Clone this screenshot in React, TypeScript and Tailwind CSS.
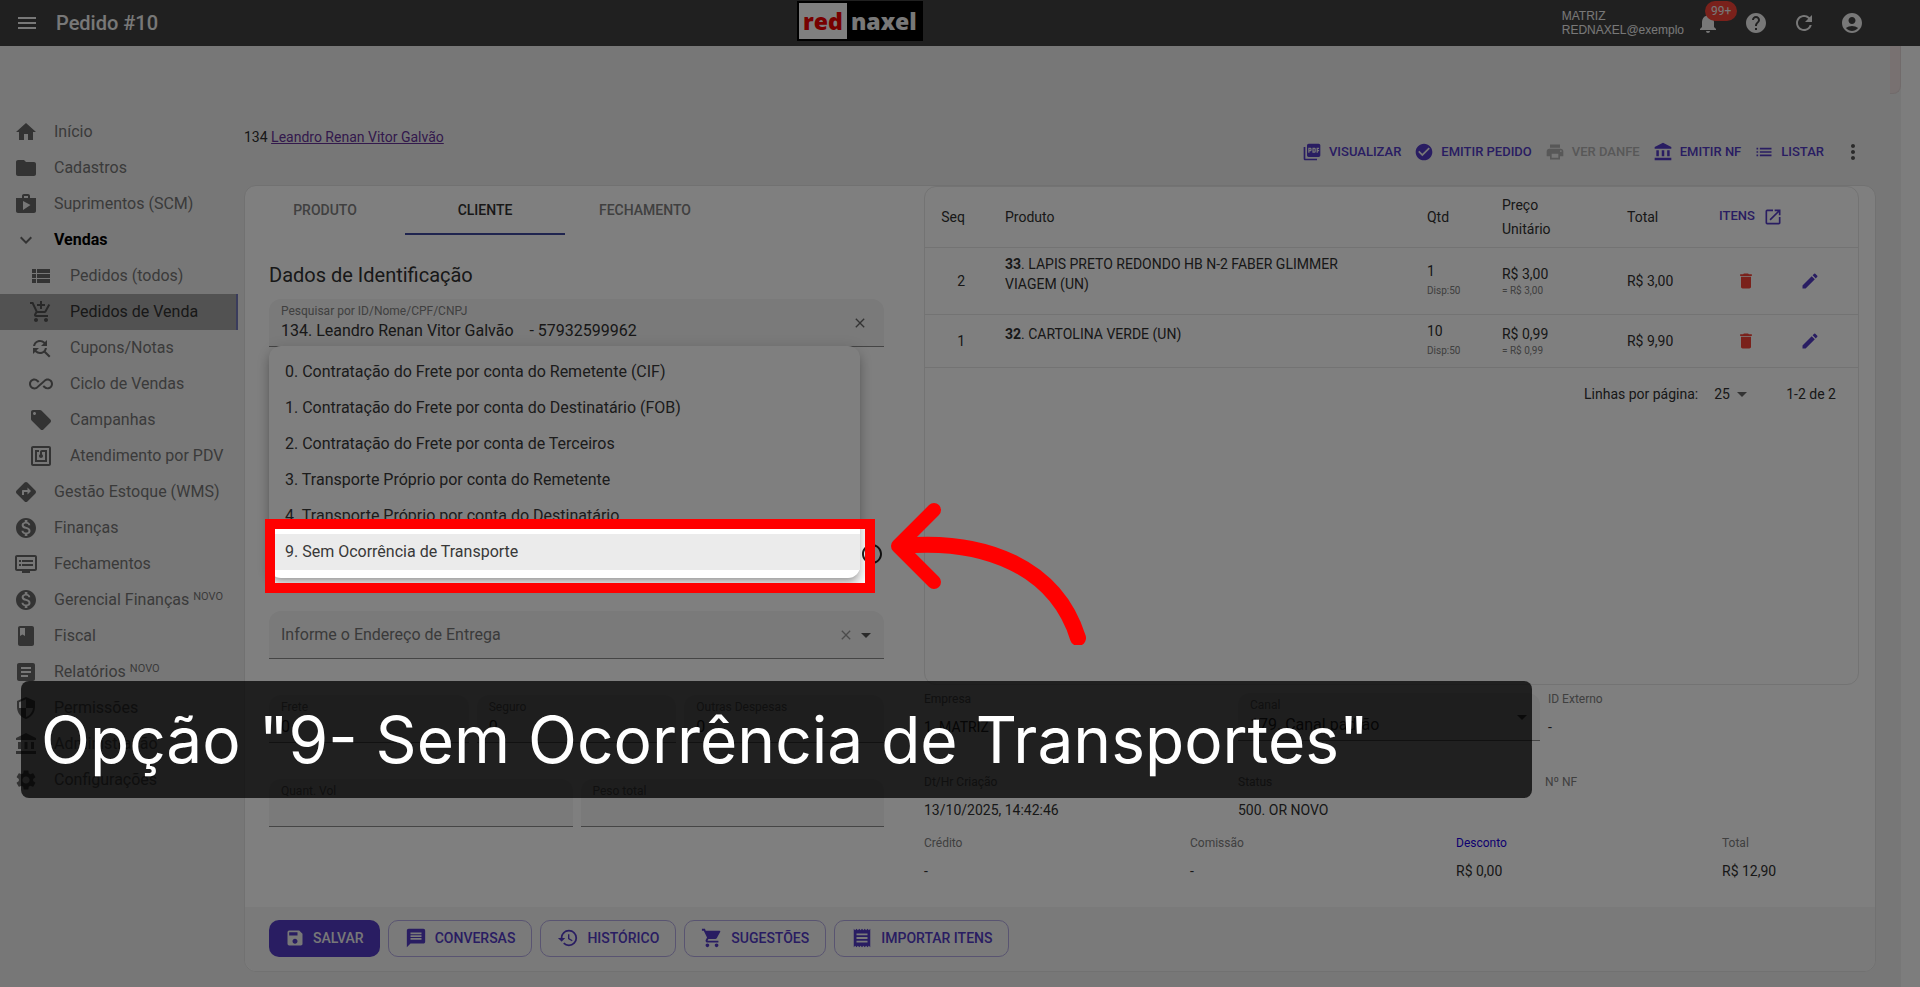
import React from 'react';
import {
  MdAccountBalance,
  MdAccountCircle,
  MdAddShoppingCart,
  MdAllInclusive,
  MdArrowDropDown,
  MdArticle,
  MdCheckCircle,
  MdClass,
  MdClose,
  MdDelete,
  MdDirections,
  MdDvr,
  MdEdit,
  MdExpandMore,
  MdFindReplace,
  MdFolder,
  MdHelp,
  MdHistory,
  MdHome,
  MdInfoOutline,
  MdList,
  MdLocalOffer,
  MdMenu,
  MdMessage,
  MdMonetizationOn,
  MdMoreVert,
  MdNfc,
  MdNotifications,
  MdOpenInNew,
  MdPictureAsPdf,
  MdPrint,
  MdReceipt,
  MdRefresh,
  MdSave,
  MdSecurity,
  MdSettings,
  MdShop,
  MdShoppingCart,
  MdViewList,
} from 'react-icons/md';
import type { IconType } from 'react-icons';

interface MenuItem {
  label: string;
  icon: IconType;
  sub?: boolean;
  open?: boolean;
  active?: boolean;
  isNew?: boolean;
}

const menuItems: MenuItem[] = [
  { label: 'Início', icon: MdHome },
  { label: 'Cadastros', icon: MdFolder },
  { label: 'Suprimentos (SCM)', icon: MdShop },
  { label: 'Vendas', icon: MdExpandMore, open: true },
  { label: 'Pedidos (todos)', icon: MdViewList, sub: true },
  { label: 'Pedidos de Venda', icon: MdAddShoppingCart, sub: true, active: true },
  { label: 'Cupons/Notas', icon: MdFindReplace, sub: true },
  { label: 'Ciclo de Vendas', icon: MdAllInclusive, sub: true },
  { label: 'Campanhas', icon: MdLocalOffer, sub: true },
  { label: 'Atendimento por PDV', icon: MdNfc, sub: true },
  { label: 'Gestão Estoque (WMS)', icon: MdDirections },
  { label: 'Finanças', icon: MdMonetizationOn },
  { label: 'Fechamentos', icon: MdDvr },
  { label: 'Gerencial Finanças', icon: MdMonetizationOn, isNew: true },
  { label: 'Fiscal', icon: MdClass },
  { label: 'Relatórios', icon: MdArticle, isNew: true },
  { label: 'Permissões', icon: MdSecurity },
  { label: 'Administração', icon: MdAccountBalance },
  { label: 'Configurações', icon: MdSettings },
];

const orderActions = [
  { label: 'VISUALIZAR', icon: MdPictureAsPdf },
  { label: 'EMITIR PEDIDO', icon: MdCheckCircle },
  { label: 'VER DANFE', icon: MdPrint, disabled: true },
  { label: 'EMITIR NF', icon: MdAccountBalance },
  { label: 'LISTAR', icon: MdList },
];

const freightOptions = [
  '0. Contratação do Frete por conta do Remetente (CIF)',
  '1. Contratação do Frete por conta do Destinatário (FOB)',
  '2. Contratação do Frete por conta de Terceiros',
  '3. Transporte Próprio por conta do Remetente',
  '4. Transporte Próprio por conta do Destinatário',
];

const orderItems = [
  {
    seq: 2,
    code: '33',
    name: 'LAPIS PRETO REDONDO HB N-2 FABER GLIMMER VIAGEM (UN)',
    qty: 1,
    price: 'R$ 3,00',
    total: 'R$ 3,00',
  },
  {
    seq: 1,
    code: '32',
    name: 'CARTOLINA VERDE (UN)',
    qty: 10,
    price: 'R$ 0,99',
    total: 'R$ 9,90',
  },
];

const footerActions = [
  { label: 'CONVERSAS', icon: MdMessage },
  { label: 'HISTÓRICO', icon: MdHistory },
  { label: 'SUGESTÕES', icon: MdShoppingCart },
  { label: 'IMPORTAR ITENS', icon: MdReceipt },
];

const Field: React.FC<{
  id: string;
  label: string;
  value?: string;
  children?: React.ReactNode;
}> = ({ id, label, value = '', children }) => (
  <div className="flex h-12 min-w-0 flex-1 items-center rounded-t-xl border-b border-[#8a8a8a] bg-[#f4f4f4] px-3">
    <div className="min-w-0 flex-1">
      <label htmlFor={id} className="block text-xs leading-4 text-[#808080]">
        {label}
      </label>
      <input
        id={id}
        defaultValue={value}
        className="block h-6 w-full bg-transparent text-base text-[#303030] outline-none"
      />
    </div>
    {children}
  </div>
);

const Info: React.FC<{ label: string; value?: string; blue?: boolean }> = ({ label, value, blue }) => (
  <div className="h-12">
    <div className={`text-xs leading-4 ${blue ? 'text-[#1a00e0]' : 'text-[#808080]'}`}>{label}</div>
    <div className="mt-2 text-sm leading-6 text-[#303030]">{value}</div>
  </div>
);

const Header: React.FC = () => (
  <header className="flex h-[46px] items-center justify-between bg-[#414141] text-[#f0f0f0] shadow-md">
    <div className="flex items-center pl-[15px]">
      <button type="button" aria-label="Menu">
        <MdMenu className="h-6 w-6" />
      </button>
      <h1 className="ml-[17px] text-xl font-medium">Pedido #10</h1>
    </div>
    <div className="mb-1 flex h-10 items-center bg-black p-[2px] font-['Open_Sans',sans-serif] text-[23px] font-extrabold">
      <span className="flex h-9 items-center bg-white px-1 text-[#ee0000]">red</span>
      <span className="px-1">naxel</span>
    </div>
    <div className="flex items-center pr-14">
      <div className="font-['Liberation_Sans',sans-serif] text-xs leading-[14px]">
        MATRIZ
        <br />
        REDNAXEL@exemplo
      </div>
      <div className="ml-3 flex items-center gap-6">
        <button type="button" aria-label="Notificações" className="relative">
          <MdNotifications className="h-6 w-6" />
          <span className="absolute -top-2.5 left-[9px] rounded-full bg-[#f44336] px-1.5 text-xs leading-5">
            99+
          </span>
        </button>
        <button type="button" aria-label="Ajuda">
          <MdHelp className="h-6 w-6" />
        </button>
        <button type="button" aria-label="Atualizar">
          <MdRefresh className="h-6 w-6" />
        </button>
        <button type="button" aria-label="Conta">
          <MdAccountCircle className="h-6 w-6" />
        </button>
      </div>
    </div>
  </header>
);

const Sidebar: React.FC = () => (
  <nav className="w-[238px] shrink-0 pt-[68px]">
    {menuItems.map(({ label, icon: Icon, sub, open, active, isNew }) => (
      <a
        key={label}
        href="#"
        className={`flex h-9 items-center whitespace-nowrap text-base ${sub ? 'pl-[29px]' : 'pl-3.5'} ${
          active ? 'border-r-2 border-[#7479b8] bg-[#a4a4a4] text-[#303030]' : 'text-[#757575]'
        } ${open ? 'font-bold text-black' : ''}`}
      >
        <Icon className={`h-6 w-6 shrink-0 ${active ? 'text-[#505050]' : 'text-[#666666]'}`} />
        <span className={sub ? 'ml-[17px]' : 'ml-4'}>
          {label}
          {isNew && <sup className="ml-1 text-[11px]">NOVO</sup>}
        </span>
      </a>
    ))}
  </nav>
);

/* Open list of freight types, with the last option spotlighted */
const FreightMenu: React.FC = () => (
  <div className="relative mt-[183px] flex h-12 items-center justify-end">
    <MdInfoOutline className="h-6 w-6 text-[#212121]" />
    <ul
      role="listbox"
      className="absolute bottom-0 left-0 right-6 rounded-xl bg-white py-2 text-base text-[#383838] shadow-[0_5px_5px_-3px_rgba(0,0,0,0.2),0_8px_10px_1px_rgba(0,0,0,0.14),0_3px_14px_2px_rgba(0,0,0,0.12)]"
    >
      {freightOptions.map((option) => (
        <li key={option} role="option" aria-selected="false" className="h-9 px-4 leading-9">
          {option}
        </li>
      ))}
      <li role="option" aria-selected="true" className="relative h-9 bg-[#ebebeb] px-4 leading-9">
        9. Sem Ocorrência de Transporte
        <div className="pointer-events-none absolute -bottom-[23px] -left-1 -right-[15px] -top-[15px] z-20 border-10 border-[#ff0000] shadow-[0_0_0_2000px_rgba(0,0,0,0.5)]">
          <svg
            viewBox="0 0 200 150"
            className="absolute -top-[34px] left-full z-30 ml-[22px] h-[150px] w-[200px]"
            fill="none"
            stroke="#ff0000"
            strokeLinecap="round"
            strokeLinejoin="round"
            strokeWidth="14"
          >
            <path d="M47 15 L11 51 L47 87" />
            <path strokeWidth="16" d="M13 51 C99 43 169 73 191 143" />
          </svg>
        </div>
      </li>
    </ul>
  </div>
);

const ClientForm: React.FC = () => (
  <section>
    <div role="tablist" className="flex text-sm font-medium text-[#808080]">
      <button type="button" role="tab" className="h-[49px] w-40 pb-0.5">
        PRODUTO
      </button>
      <button
        type="button"
        role="tab"
        aria-selected="true"
        className="h-[49px] w-40 border-b-2 border-[#3f489f] text-[#303030]"
      >
        CLIENTE
      </button>
      <button type="button" role="tab" className="h-[49px] w-40 pb-0.5">
        FECHAMENTO
      </button>
    </div>
    <div className="pl-6">
      <h2 className="mt-[26px] text-xl leading-7 text-[#303030]">Dados de Identificação</h2>
      <div className="mt-2.5 flex">
        <Field
          id="cliente"
          label="Pesquisar por ID/Nome/CPF/CNPJ"
          value={'134. Leandro Renan Vitor Galvão\u00a0\u00a0\u00a0 - 57932599962'}
        >
          <button type="button" aria-label="Limpar cliente" className="mr-1 text-[#666666]">
            <MdClose className="h-4 w-4" />
          </button>
        </Field>
      </div>
      <FreightMenu />
      <div className="mt-[33px] flex h-12 items-center rounded-t-xl border-b border-[#8a8a8a] bg-[#f4f4f4] px-3">
        <input
          aria-label="Endereço de Entrega"
          placeholder="Informe o Endereço de Entrega"
          className="flex-1 bg-transparent text-base outline-none placeholder:text-[#757575]"
        />
        <MdClose className="h-4 w-4 text-[#999999]" />
        <MdArrowDropDown className="-mr-1.5 h-6 w-6 text-[#555555]" />
      </div>
      <div className="mt-9 flex gap-2">
        <Field id="frete" label="Frete" value="0" />
        <Field id="seguro" label="Seguro" value="0" />
        <Field id="despesas" label="Outras Despesas" value="0" />
      </div>
      <div className="mb-20 mt-9 flex gap-2">
        <Field id="volumes" label="Quant. Vol" />
        <Field id="peso" label="Peso total" />
      </div>
    </div>
  </section>
);

const ItemsTable: React.FC = () => (
  <div className="h-[499px] rounded-xl border border-[#e6e6e6]">
    <table className="w-full table-fixed border-collapse text-left text-sm text-[#303030]">
      <colgroup>
        <col className="w-10" />
        <col className="w-10" />
        <col />
        <col className="w-[75px]" />
        <col className="w-[125px]" />
        <col className="w-[92px]" />
        <col className="w-[54px]" />
        <col className="w-[85px]" />
      </colgroup>
      <thead>
        <tr className="h-[60px] border-b border-[#e6e6e6]">
          <th className="text-right font-normal">Seq</th>
          <th />
          <th className="font-normal">Produto</th>
          <th className="font-normal">Qtd</th>
          <th className="pr-16 font-normal leading-6">Preço Unitário</th>
          <th className="font-normal">Total</th>
          <th colSpan={2}>
            <a href="#" className="flex items-center gap-2 text-[13px] font-medium text-[#523ac4]">
              ITENS
              <MdOpenInNew className="h-5 w-5" />
            </a>
          </th>
        </tr>
      </thead>
      <tbody>
        {orderItems.map((item) => (
          <tr key={item.seq} className="border-b border-[#e6e6e6] leading-5">
            <td className="py-1.5 text-right">{item.seq}</td>
            <td />
            <td className="py-1.5">
              <p className="mb-3.5 max-w-[360px]">
                <b>{item.code}</b>. {item.name}
              </p>
            </td>
            <td className="py-1.5">
              {item.qty}
              <div className="text-[10px] leading-5 text-[#808080]">Disp:50</div>
            </td>
            <td className="py-1.5">
              {item.price}
              <div className="text-[10px] leading-[14px] text-[#808080]">= {item.price}</div>
            </td>
            <td className="py-1.5">{item.total}</td>
            <td>
              <button type="button" aria-label="Excluir item" className="ml-[17px] block text-[#f44336]">
                <MdDelete className="h-5 w-5" />
              </button>
            </td>
            <td>
              <button type="button" aria-label="Editar item" className="ml-[27px] block text-[#523ac4]">
                <MdEdit className="h-5 w-5" />
              </button>
            </td>
          </tr>
        ))}
      </tbody>
    </table>
    <div className="mt-3.5 flex items-center justify-end pr-[22px] text-sm text-[#303030]">
      <label htmlFor="page-size">Linhas por página:</label>
      <div className="ml-4 flex items-center">
        <select id="page-size" className="appearance-none bg-transparent">
          <option>25</option>
        </select>
        <MdArrowDropDown className="h-6 w-6 text-[#666666]" />
      </div>
      <span className="ml-8">1-2 de 2</span>
    </div>
  </div>
);

const OrderSummary: React.FC = () => (
  <section className="pl-10 pr-4">
    <ItemsTable />
    <div className="mt-1.5 grid grid-cols-[306fr_302fr_311fr] gap-x-2">
      <Info label="Empresa" value="1. MATRIZ" />
      <div className="mt-0.5 flex">
        <Field id="canal" label="Canal" value="179. Canal padrão">
          <MdArrowDropDown className="-mr-1.5 h-6 w-6 text-[#555555]" />
        </Field>
      </div>
      <Info label="ID Externo" value="-" />
    </div>
    <div className="mt-[33px] grid grid-cols-[306fr_299fr_314fr] gap-x-2">
      <Info label="Dt/Hr Criação" value="13/10/2025, 14:42:46" />
      <Info label="Status" value="500. OR NOVO" />
      <Info label="Nº NF" />
    </div>
    <div className="mt-[13px] grid grid-cols-[266fr_266fr_266fr_137fr]">
      <Info label="Crédito" value="-" />
      <Info label="Comissão" value="-" />
      <Info label="Desconto" value="R$ 0,00" blue />
      <Info label="Total" value="R$ 12,90" />
    </div>
  </section>
);

const App: React.FC = () => (
  <div className="relative flex min-h-screen flex-col overflow-hidden bg-[#efefef] font-[Roboto,sans-serif]">
    <Header />
    <div className="flex flex-1">
      <div className="z-10 flex min-w-0 flex-1 bg-[#efefef]">
        <Sidebar />
        <main className="min-w-0 flex-1 pb-3.5 pl-1.5 pr-3.5">
          <div className="flex h-[139px] items-start justify-between">
            <p className="mt-[81px] text-sm leading-5 text-[#303030]">
              134{' '}
              <a href="#" className="text-[#663399] underline">
                Leandro Renan Vitor Galvão
              </a>
            </p>
            <div className="mt-[94px] flex h-6 items-center gap-[13px] pr-[11px]">
              {orderActions.map(({ label, icon: Icon, disabled }) => (
                <button
                  key={label}
                  type="button"
                  disabled={disabled}
                  className={`flex items-center gap-[7px] text-[13px] font-medium ${
                    disabled ? 'text-[#b0b0b0]' : 'text-[#523ac4]'
                  }`}
                >
                  <Icon className="h-5 w-5" />
                  {label}
                </button>
              ))}
              <button type="button" aria-label="Mais opções" className="ml-1 text-[#555555]">
                <MdMoreVert className="h-6 w-6" />
              </button>
            </div>
          </div>
          <div className="rounded-xl border border-[#e2e2e2] bg-white">
            <div className="grid grid-cols-[639fr_991fr]">
              <ClientForm />
              <OrderSummary />
            </div>
            <footer className="flex h-16 items-center gap-2 rounded-b-xl bg-[#f4f4f4] px-6 pb-0.5 text-sm font-medium">
              <button
                type="button"
                className="flex h-[37px] items-center gap-2 rounded-[10px] bg-[#523ac4] px-4 text-[#f0f0f0]"
              >
                <MdSave className="h-5 w-5" />
                SALVAR
              </button>
              {footerActions.map(({ label, icon: Icon }) => (
                <button
                  key={label}
                  type="button"
                  className="flex h-[37px] items-center gap-2 rounded-[10px] border border-[#b3a9e3] px-4 text-[#523ac4]"
                >
                  <Icon className="h-[22px] w-[22px]" />
                  {label}
                </button>
              ))}
            </footer>
          </div>
        </main>
      </div>
      <div className="h-12 w-[11px] rounded-br-lg border-b border-r border-[#e2d6d6] bg-[#f0e2e2]" />
      <div className="w-[19px] bg-[#fafafa]" />
    </div>

    <div className="absolute bottom-[189px] left-[21px] right-[388px] z-30 rounded-lg bg-black/75 px-5 py-3.5 font-[Inter,sans-serif] text-[64px] leading-[89px] text-white">
      Opção "9- Sem Ocorrência de Transportes"
    </div>
  </div>
);

export default App;
